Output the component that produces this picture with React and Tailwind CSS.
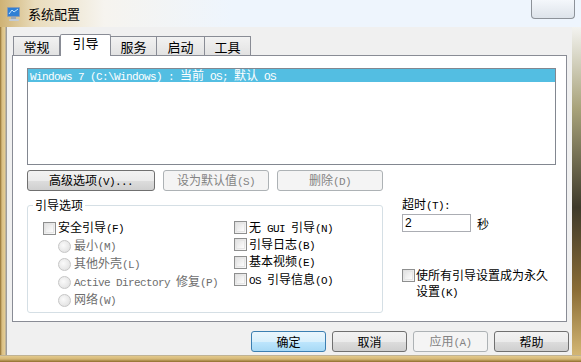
import React from "react";

const M = ({ t, className = "" }) => {
  const parts = t.split(/([\x20-\x7e]+)/).filter((p) => p !== "");
  return (
    <span className={className}>
      {parts.map((p, i) =>
        /^[\x20-\x7e]+$/.test(p) ? (
          <span key={i} className="font-['Liberation_Mono',monospace] text-[11px] tracking-[-0.6px] whitespace-pre">
            {p}
          </span>
        ) : (
          <span key={i}>{p}</span>
        )
      )}
    </span>
  );
};

const Btn = ({ w, children, disabled, def }) => (
  <div
    className={
      "h-[21px] flex items-center justify-center rounded-[3px] border " +
      (def
        ? "border-[#3c7fb1] bg-[linear-gradient(to_bottom,#eaf6fd_0%,#d9f0fc_50%,#bee6fd_51%,#a7d9f5_100%)] text-[#000]"
        : disabled
        ? "border-[#adb2b5] bg-[#f4f4f4] text-[#838383]"
        : "border-[#707070] bg-[linear-gradient(to_bottom,#f2f2f2_0%,#ebebeb_50%,#dddddd_51%,#cfcfcf_100%)] text-[#000]")
    }
    style={{ width: w }}
  >
    {children}
  </div>
);

const Check = ({ label, disabled }) => (
  <div className="flex items-center h-full">
    <div className="w-[13px] h-[13px] border border-[#8e8f8f] bg-[linear-gradient(135deg,#dcdcdc,#fbfbfb)] p-[1px]">
      <div className="w-full h-full border border-[#e6e6e6] bg-[linear-gradient(135deg,#e4e4e4,#fdfdfd)]" />
    </div>
    <M t={label} className={"ml-[2px] " + (disabled ? "text-[#6d6d6d]" : "text-black")} />
  </div>
);

const Radio = ({ label }) => (
  <div className="flex items-center h-[18px] pl-[15px]">
    <div className="w-[13px] h-[13px] rounded-full border border-[#c6c6c6] bg-[radial-gradient(circle_at_40%_40%,#fafafa,#dcdcdc)]" />
    <M t={label} className="ml-[3px] text-[#6d6d6d]" />
  </div>
);

const Tab = ({ w, label, sel }) =>
  sel ? (
    <div
      className="h-[22px] -mb-px relative z-10 flex items-start justify-center pt-[1px] bg-white border border-b-0 border-[#898c95] rounded-t-[2px] text-[13px] text-black"
      style={{ width: w }}
    >
      {label}
    </div>
  ) : (
    <div
      className="h-[19px] flex items-center justify-center bg-[linear-gradient(to_bottom,#f2f2f2,#e2e2e2)] border border-b-0 border-[#898c95] -ml-px text-[13px] text-black"
      style={{ width: w }}
    >
      {label}
    </div>
  );

export default function App() {
  return (
    <div className="w-[581px] h-[362px] overflow-hidden relative bg-[#d7bd82] font-['Noto_Sans_CJK_SC',sans-serif] text-[12px] leading-none flex flex-col">
      {/* title bar */}
      <div className="h-[27px] shrink-0 flex items-center bg-[linear-gradient(to_right,#cfb274_0%,#e9dcbc_6%,#f6f4ef_18%,#eef5fd_40%,#eef5fd_100%)] relative">
        <svg width="16" height="16" viewBox="0 0 16 16" className="ml-[6px] mt-[1px]">
          <rect x="1" y="1" width="13" height="10" rx="1" fill="#8a9bb0" />
          <rect x="2" y="2" width="11" height="8" fill="#2f7fd4" />
          <path d="M3 8 L6 4 L8 6 L12 3" stroke="#bfe3ff" strokeWidth="1" fill="none" />
          <rect x="5" y="11" width="5" height="2" fill="#9aa7b6" />
          <rect x="3" y="13" width="10" height="2" rx="1" fill="#c2cbd6" />
        </svg>
        <span className="ml-[6px] text-[13px] text-black">系统配置</span>
        <div className="absolute right-[6px] top-0 w-[44px] h-[19px] border border-t-0 border-[#8d9299] rounded-b-[4px] bg-[linear-gradient(to_bottom,#f4f7fb,#dde3ea)]" />
      </div>

      <div className="flex flex-1">
        {/* left frame */}
        <div className="w-[7px] shrink-0 bg-[linear-gradient(to_right,#8e6c2c_0px,#d9bf84_2px,#e5cd93_5px,#9c9c9c_6px)]" />
        {/* client */}
        <div className="w-[565px] shrink-0 bg-[#f0f0f0] flex flex-col">
          {/* tabs */}
          <div className="h-[22px] mt-[6px] ml-[7px] flex items-end">
            <Tab w={47} label="常规" />
            <Tab w={51} label="引导" sel />
            <Tab w={47} label="服务" />
            <Tab w={49} label="启动" />
            <Tab w={47} label="工具" />
          </div>
          {/* panel */}
          <div className="ml-[5px] w-[555px] h-[267px] border border-[#898c95] bg-white flex flex-col">
            {/* list */}
            <div className="ml-[14px] mt-[12px] w-[529px] h-[97px] border border-[#828790] bg-white">
              <div className="h-[13px] bg-[#53bee2] text-white flex items-center pl-[2px]">
                <M t="Windows 7 (C:\Windows) : 当前 OS; 默认 OS" />
              </div>
            </div>
            {/* buttons */}
            <div className="ml-[14px] mt-[5px] flex gap-[8px]">
              <Btn w={128}><M t="高级选项(V)..." /></Btn>
              <Btn w={106} disabled><M t="设为默认值(S)" /></Btn>
              <Btn w={106} disabled><M t="删除(D)" /></Btn>
            </div>
            {/* lower */}
            <div className="flex mt-[7px]">
              <div className="ml-[14px] w-[356px] relative pt-[7px]">
                <div className="absolute left-[6px] top-0 bg-white px-[2px] h-[14px] flex items-center text-black">
                  引导选项
                </div>
                <div className="h-[108px] border border-[#d5dfe5] rounded-[3px] flex pt-[13px]">
                  <div className="w-[206px] pl-[15px] flex flex-col">
                    <div className="h-[18px]"><Check label="安全引导(F)" /></div>
                    <Radio label="最小(M)" />
                    <Radio label="其他外壳(L)" />
                    <Radio label="Active Directory 修复(P)" />
                    <Radio label="网络(W)" />
                  </div>
                  <div className="flex flex-col">
                    <div className="h-[17px]"><Check label="无 GUI 引导(N)" /></div>
                    <div className="h-[17px]"><Check label="引导日志(B)" /></div>
                    <div className="h-[18px]"><Check label="基本视频(E)" /></div>
                    <div className="h-[17px]"><Check label="OS 引导信息(O)" /></div>
                  </div>
                </div>
              </div>
              <div className="ml-[19px] flex flex-col">
                <div className="h-[14px] flex items-center text-black"><M t="超时(T):" /></div>
                <div className="flex items-center mt-[2px]">
                  <div className="w-[69px] h-[18px] border border-[#abadb3] bg-white flex items-center pl-[2px] font-['Liberation_Sans',sans-serif] text-[12px]">
                    2
                  </div>
                  <span className="ml-[6px] mt-[1px]">秒</span>
                </div>
                <div className="mt-[35px] flex items-start">
                  <div className="w-[13px] h-[13px] mt-[2px] shrink-0 border border-[#8e8f8f] bg-[linear-gradient(135deg,#dcdcdc,#fbfbfb)] p-[1px]">
                    <div className="w-full h-full border border-[#e6e6e6] bg-[linear-gradient(135deg,#e4e4e4,#fdfdfd)]" />
                  </div>
                  <div className="ml-[1px] w-[140px] leading-[16px] text-black">
                    <div>使所有引导设置成为永久</div>
                    <div><M t="设置(K)" /></div>
                  </div>
                </div>
              </div>
            </div>
          </div>
          {/* bottom buttons */}
          <div className="mt-[9px] flex justify-end gap-[6px] mr-[3px]">
            <Btn w={75} def>确定</Btn>
            <Btn w={75}>取消</Btn>
            <Btn w={75} disabled><M t="应用(A)" /></Btn>
            <Btn w={75}>帮助</Btn>
          </div>
        </div>
        {/* right frame */}
        <div className="flex-1 bg-[linear-gradient(to_bottom,#f3f3f0_0%,#a8a27a_25%,#3e3a2a_55%,#8a6c35_80%,#d3b674_100%)]" />
      </div>
      {/* bottom frame */}
      <div className="h-[7px] shrink-0 bg-[linear-gradient(to_bottom,#9c9c9c_0px,#e3c98c_1px,#d5b877_4px,#8e6c2c_7px)]" />
    </div>
  );
}
